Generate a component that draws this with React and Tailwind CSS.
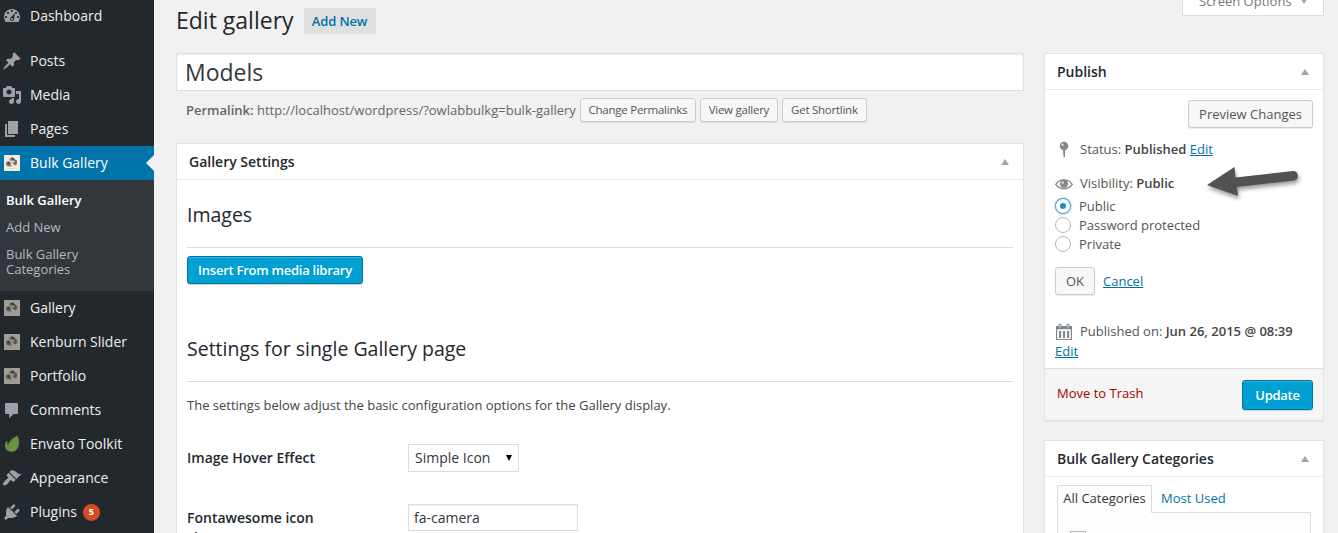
import React from "react";

const PATHS = {
  dashboard:
    "M3.76 16h12.48c1.1-1.37 1.76-3.11 1.76-5 0-4.42-3.58-8-8-8s-8 3.58-8 8c0 1.89.66 3.63 1.76 5zM10 4c.55 0 1 .45 1 1s-.45 1-1 1-1-.45-1-1 .45-1 1-1zM6 6c.55 0 1 .45 1 1s-.45 1-1 1-1-.45-1-1 .45-1 1-1zm8 0c.55 0 1 .45 1 1s-.45 1-1 1-1-.45-1-1 .45-1 1-1zm-5.37 5.55L13 7l-1 6c0 1.1-.9 2-2 2s-2-.9-2-2c0-.57.24-1.08.63-1.45zM4 10c.55 0 1 .45 1 1s-.45 1-1 1-1-.45-1-1 .45-1 1-1zm12 0c.55 0 1 .45 1 1s-.45 1-1 1-1-.45-1-1 .45-1 1-1zm-5 3c0-.55-.45-1-1-1s-1 .45-1 1 .45 1 1 1 1-.45 1-1z",
  post: "M10.44 3.02l1.82-1.82 6.36 6.35-1.83 1.82c-1.05-.68-2.48-.57-3.41.36l-.75.75c-.92.93-1.04 2.35-.35 3.41l-1.83 1.82-2.41-2.41-2.8 2.79c-.42.42-3.38 2.71-3.8 2.29s1.86-3.39 2.28-3.81l2.79-2.79L4.1 9.36l1.83-1.82c1.05.69 2.48.57 3.4-.36l.75-.75c.93-.92 1.05-2.35.36-3.41z",
  media:
    "M13 11V4c0-.55-.45-1-1-1h-1.67L9 1H5L3.67 3H2c-.55 0-1 .45-1 1v7c0 .55.45 1 1 1h10c.55 0 1-.45 1-1zM7 4.5c1.38 0 2.5 1.12 2.5 2.5S8.38 9.5 7 9.5 4.5 8.38 4.5 7 5.62 4.5 7 4.5zM14 6h5v10.5c0 1.38-1.12 2.5-2.5 2.5S14 17.88 14 16.5s1.12-2.5 2.5-2.5c.17 0 .34.02.5.05V9h-3V6zm-4 8.05V13h2v3.5c0 1.38-1.12 2.5-2.5 2.5S7 17.88 7 16.5 8.12 14 9.5 14c.17 0 .34.02.5.05z",
  page: "M6 15V2h10v13H6zm-1 1h8v2H3V5h2v11z",
  comments:
    "M4 3h11c.55 0 1 .45 1 1v9c0 .55-.45 1-1 1h-3.5L7.2 18.2V14H4c-.55 0-1-.45-1-1V4c0-.55.45-1 1-1z",
  appearance:
    "M14.48 11.06L7.41 3.99l1.5-1.5c.5-.56 2.3-.47 3.51.32 1.21.8 1.43 1.28 2.91 2.1 1.18.64 2.45 1.26 4.45.85zm-.71.71L6.7 4.7 4.93 6.47c-.39.39-.39 1.02 0 1.41l1.06 1.06c.39.39.39 1.03 0 1.42-.6.6-1.43 1.11-2.21 1.69-.35.26-.7.53-1.01.84C1.43 14.23.4 16.08 1.4 17.07c.99 1 2.84-.03 4.18-1.36.31-.31.58-.66.85-1.02.57-.78 1.08-1.61 1.69-2.21.39-.39 1.02-.39 1.41 0l1.06 1.06c.39.39 1.02.39 1.41 0z",
  plugins:
    "M13.11 4.36L9.87 7.6 8 5.73l3.24-3.24c.35-.34 1.05-.2 1.56.32.52.51.66 1.21.31 1.55zm-8 1.77l.91-1.12 9.01 9.01-1.19.84c-.71.71-2.63 1.16-3.82 1.16H6.14L4.9 17.26c-.59.59-1.54.59-2.12 0-.59-.58-.59-1.53 0-2.12l1.24-1.24v-3.88c0-1.13.4-3.19 1.09-3.89zm7.26 3.97l3.24-3.24c.34-.35 1.04-.21 1.55.31.52.51.66 1.21.31 1.55l-3.24 3.25z",
};

function Thumb({ active }) {
  return (
    <svg viewBox="0 0 16 16" className={active ? "h-4 w-4" : "h-4 w-4 opacity-60"}>
      <rect width="16" height="16" fill="#f3ecda" />
      <path d="M2 7.500l2.500-1.500 2 1.500.5 2.500-2 1.500-2.500-1z" fill="#77726b" />
      <path d="M5 4l3-2 2 1 3 3-1.500 1-3-1.500-2 .5z" fill="#8d867c" />
      <path d="M9.500 7l3 0 .5 2.500-2 1-2-1.500z" fill="#7b746c" />
      <path d="M7 3.500l2-.5 1.500 1.500-1.500 1zM3.500 8l1.500-.5.5 1.500-1 .5z" fill="#403d3a" />
      <path d="M11 5l2 1-.5 2-1.200-1z" fill="#55504b" />
      <path d="M6.500 6.500l2-.5 1 2-1.500 1.500z" fill="#cfc5b5" />
      <path d="M6.500 10l1.500.5-1 1.500-1.500-.5z" fill="#9a8f83" />
      <path d="M4 13h7l-2 .8H5z" fill="#d8cfba" />
    </svg>
  );
}

function MenuIcon({ name, active }) {
  if (name === "thumb") return <Thumb active={active} />;
  if (name === "envato")
    return (
      <svg viewBox="0 0 16 18" className="h-[18px] w-4">
        <path
          d="M12.300 1.200c.7-.4 1.300-.1 1.600.6 1.200 2.800 1.700 6.900.5 10-1.100 3-3.600 5-6.600 5-4 0-6.800-2.800-6.800-6.300 0-1.900.6-3.300 1.400-4.300.4-.5.9-.3.9.3 0 1.500.2 2.900.8 4.200C4.300 6.200 7.700 3.600 12.300 1.200z"
          fill="#6b9240"
        />
        <path d="M4.200 10.800c.4-3 2.600-5.300 5.500-6.900" stroke="#4c6b33" strokeWidth=".8" fill="none" />
      </svg>
    );
  return (
    <svg viewBox="0 0 20 20" className="h-5 w-5" fill="#9ba1a7">
      <path d={PATHS[name]} />
    </svg>
  );
}

function MenuItem({ icon, label, active, badge }) {
  return (
    <div
      className={
        "relative flex h-[34px] shrink-0 items-center text-sm leading-[18px] " +
        (active ? "bg-[#0073aa] text-white" : "text-[#eee]")
      }
    >
      <span className="flex w-6 shrink-0 justify-center">
        <MenuIcon name={icon} active={active} />
      </span>
      <span className="ml-1.5 whitespace-nowrap">{label}</span>
      {badge && (
        <span className="ml-1.5 flex h-[17px] w-[17px] items-center justify-center rounded-full bg-[#d54e21] text-[9px] font-bold text-white">
          {badge}
        </span>
      )}
      {active && (
        <span className="absolute right-0 top-[9px] border-y-8 border-r-8 border-y-transparent border-r-[#f1f1f1]" />
      )}
    </div>
  );
}

function Sidebar() {
  return (
    <nav className="-mt-px flex w-[154px] shrink-0 flex-col bg-[#23282d]">
      <MenuItem icon="dashboard" label="Dashboard" />
      <div className="h-[11px] shrink-0" />
      <MenuItem icon="post" label="Posts" />
      <MenuItem icon="media" label="Media" />
      <MenuItem icon="page" label="Pages" />
      <MenuItem icon="thumb" label="Bulk Gallery" active />
      <div className="h-[111px] shrink-0 bg-[#32373c] px-1.5 pt-[7px] text-[13px] text-[#b4b9be]">
        <div className="flex h-[27px] items-center font-semibold text-white">Bulk Gallery</div>
        <div className="flex h-[27px] items-center">Add New</div>
        <div className="pt-1.5 leading-[15px]">
          Bulk Gallery
          <br />
          Categories
        </div>
      </div>
      <MenuItem icon="thumb" label="Gallery" />
      <MenuItem icon="thumb" label="Kenburn Slider" />
      <MenuItem icon="thumb" label="Portfolio" />
      <MenuItem icon="comments" label="Comments" />
      <MenuItem icon="envato" label="Envato Toolkit" />
      <MenuItem icon="appearance" label="Appearance" />
      <MenuItem icon="plugins" label="Plugins" badge="5" />
      <div className="h-3 shrink-0" />
    </nav>
  );
}

function Box({ title, children, className }) {
  return (
    <section className={"border border-[#e2e2e2] bg-white shadow-[0_1px_1px_rgba(0,0,0,0.04)] " + className}>
      <div className="flex h-[36px] items-center justify-between border-b border-[#eaeaea] pl-3 pr-[14px]">
        <h3 className="text-sm font-semibold text-[#23282d]">{title}</h3>
        <span className="border-x-4 border-b-[6px] border-x-transparent border-b-[#a0a5aa]" />
      </div>
      {children}
    </section>
  );
}

function Button({ children, className }) {
  return (
    <button
      className={
        "flex shrink-0 items-center justify-center whitespace-nowrap rounded-[3px] border border-[#ccc] bg-[#f7f7f7] text-[#555] shadow-[0_1px_0_rgba(0,0,0,0.08)] " +
        className
      }
    >
      {children}
    </button>
  );
}

function PrimaryButton({ children, className }) {
  return (
    <button
      className={
        "flex items-center justify-center whitespace-nowrap rounded-[3px] border border-[#0073aa] bg-[#00a0d2] pt-0.5 text-[13px] font-semibold tracking-[-0.25px] text-white shadow-[inset_0_1px_0_rgba(120,200,230,0.5),0_1px_0_rgba(0,0,0,0.15)] " +
        className
      }
    >
      {children}
    </button>
  );
}

function Link({ children }) {
  return <a className="text-[#0073aa] underline">{children}</a>;
}

function Radio({ label, checked }) {
  return (
    <label className="flex h-[19px] items-center">
      <span
        className={
          "mb-px flex h-4 w-4 items-center justify-center rounded-full border bg-white " +
          (checked ? "border-[#5b9dd9] shadow-[0_0_2px_rgba(30,140,190,0.8)]" : "border-[#b4b9be]")
        }
      >
        {checked && <span className="h-1.5 w-1.5 rounded-full bg-[#1e8cbe]" />}
      </span>
      <span className="ml-2">{label}</span>
    </label>
  );
}

function GallerySettings() {
  return (
    <Box title="Gallery Settings" className="mt-[21px] h-[420px]">
      <div className="px-2.5 text-[13px] text-[#444]">
        <h2 className="flex h-[68px] items-center border-b border-[#ddd] pt-[3px] text-[19.5px] text-[#23282d]">Images</h2>
        <PrimaryButton className="mt-2 h-7 w-[176px]">Insert From media library</PrimaryButton>
        <h2 className="mt-[38px] flex h-[60px] items-center border-b border-[#ddd] pb-1.5 text-[19.5px] text-[#23282d]">
          Settings for single Gallery page
        </h2>
        <p className="mt-[13px] leading-5">The settings below adjust the basic configuration options for the Gallery display.</p>
        <div className="mt-[29px] flex h-7 items-center">
          <span className="w-[221px] text-sm font-semibold text-[#23282d]">Image Hover Effect</span>
          <div className="flex h-7 w-[111px] items-center justify-between border border-[#ddd] bg-white pl-1.5 pr-1.5 text-sm text-[#32373c]">
            Simple Icon
            <span className="border-x-[3.5px] border-t-[6px] border-x-transparent border-t-black" />
          </div>
        </div>
        <div className="mt-8 flex h-[27px]">
          <span className="w-[221px] pt-[4px] text-sm font-semibold leading-5 text-[#23282d]">
            Fontawesome icon
            <br />
            class
          </span>
          <div className="flex h-[27px] w-[170px] items-center border border-[#ddd] bg-white pl-[5px] text-sm text-[#32373c] shadow-[inset_0_1px_2px_rgba(0,0,0,0.07)]">
            fa-camera
          </div>
        </div>
      </div>
    </Box>
  );
}

function PublishBox() {
  return (
    <Box title="Publish" className="relative mt-[37px] h-[368px]">
      <div className="px-2.5 text-[13px] text-[#555]">
        <div className="flex justify-end pt-2.5">
          <Button className="h-7 w-[125px] pt-0.5 text-[13px]">Preview Changes</Button>
        </div>
        <div className="mt-3 flex h-5 items-center">
          <svg viewBox="0 0 18 18" className="mr-[7px] h-[18px] w-[18px]">
            <circle cx="9" cy="5" r="4.300" fill="#82878c" />
            <path d="M8 9h2.200l-.3 7-1.200.8z" fill="#82878c" />
            <circle cx="7.600" cy="3.700" r="1.200" fill="#d5d7d9" />
          </svg>
          <span>
            Status: <b className="font-semibold text-[#444]">Published</b> <Link>Edit</Link>
          </span>
        </div>
        <div className="mt-[14px] flex h-5 items-center">
          <svg viewBox="0 0 18 14" className="mr-[7px] h-[14px] w-[18px]">
            <path d="M.8 7.400C4.600 1.400 13.400 1.400 17.200 7.400 13.400 13.200 4.600 13.200.8 7.400z" fill="white" stroke="#82878c" strokeWidth="1.300" />
            <circle cx="9" cy="6.800" r="4" fill="#82878c" />
            <circle cx="7.700" cy="5.600" r="1.300" fill="#d5d7d9" />
          </svg>
          <span>
            Visibility: <b className="font-semibold text-[#444]">Public</b>
          </span>
        </div>
        <div className="mt-[3px]">
          <Radio label="Public" checked />
          <Radio label="Password protected" />
          <Radio label="Private" />
        </div>
        <div className="mt-[13px] flex items-center">
          <Button className="h-7 w-10 pt-0.5 text-[13px]">OK</Button>
          <span className="ml-2 pt-0.5">
            <Link>Cancel</Link>
          </span>
        </div>
        <div className="mt-[27px] flex h-5 items-center">
          <svg viewBox="0 0 18 18" className="mr-[7px] h-[18px] w-[18px]">
            <path
              fill="#82878c"
              fillRule="evenodd"
              d="M1 3h2.500V2a1.500 1.500 0 0 1 3 0v1h5V2a1.500 1.500 0 0 1 3 0v1H17v14H1zM2.200 6.300v9.600h13.600V6.300z M4.500 1.800v2.700h1V1.800zM12.500 1.800v2.700h1V1.800z"
            />
            <path d="M4 8h2.200v7H4zM8 8h2.200v7H8zM12 8h2.200v7H12z" fill="#82878c" />
          </svg>
          <span className="whitespace-nowrap">
            Published on: <b className="font-semibold text-[#444]">Jun 26, 2015 @ 08:39</b>
          </span>
        </div>
        <div className="h-[19px] leading-[19px]">
          <Link>Edit</Link>
        </div>
      </div>
      <div className="mt-[7px] flex h-[52px] items-center justify-between border-t border-[#ddd] bg-[#f5f5f5] pl-3 pr-2.5 text-[13px]">
        <span className="pb-0.5 text-[#a00]">Move to Trash</span>
        <PrimaryButton className="h-[30px] w-[71px]">Update</PrimaryButton>
      </div>
      <svg viewBox="0 0 110 50" className="absolute left-[155px] top-[106px] h-[50px] w-[110px]">
        <path
          d="M7 25 L34.500 7 L35.500 17.500 L93 11 A4.800 4.800 0 0 1 94 20.500 L37 27 L38 36 Z"
          fill="#525252"
          style={{ filter: "drop-shadow(1px 3px 2px rgba(0,0,0,.4))" }}
        />
      </svg>
    </Box>
  );
}

function CategoriesBox() {
  return (
    <Box title="Bulk Gallery Categories" className="mt-[19px] h-[150px]">
      <div className="px-3 pt-2 text-[13px]">
        <div className="flex h-[27px]">
          <div className="relative z-10 flex h-7 w-[95px] items-center justify-center border border-b-0 border-[#ddd] bg-[#fdfdfd] pb-px text-[#32373c]">
            All Categories
          </div>
          <div className="flex h-7 items-center pl-[9px] text-[#0073aa]">Most Used</div>
        </div>
        <div className="h-20 w-[254px] border border-[#ddd] bg-[#fdfdfd] pl-3 pt-[18px]">
          <div className="h-4 w-4 border border-[#b4b9be] bg-white" />
        </div>
      </div>
    </Box>
  );
}

export default function App() {
  return (
    <div className="flex h-[533px] w-[1338px] overflow-hidden bg-[#f1f1f1] font-['Open_Sans',sans-serif]">
      <Sidebar />
      <main className="ml-[22px] w-[848px] shrink-0">
        <div className="flex h-[53px] items-start">
          <h1 className="mt-[5px] whitespace-nowrap text-[23px] leading-[30px] text-[#23282d]">Edit gallery</h1>
          <a className="ml-2.5 mt-2 flex h-[26px] w-[72px] items-center justify-center bg-[#e0e0e0] pt-0.5 text-[13px] font-semibold tracking-[-0.15px] text-[#0073aa]">
            Add New
          </a>
        </div>
        <div className="flex h-[38px] items-center border border-[#ddd] bg-white pl-2 text-[23px] text-[#32373c] shadow-[inset_0_1px_2px_rgba(0,0,0,0.07)]">
          Models
        </div>
        <div className="mt-[7px] flex h-6 items-center whitespace-nowrap pl-2.5 text-[13px] text-[#666]">
          <span className="pt-0.5">
            <b className="font-semibold">Permalink:</b> http://localhost/wordpress/?owlabbulkg=bulk-gallery
          </span>
          <div className="ml-1 flex gap-1">
            <Button className="h-6 w-[116px] text-[11.5px] tracking-[-0.25px]">Change Permalinks</Button>
            <Button className="h-6 w-[78px] text-[11.5px] tracking-[-0.25px]">View gallery</Button>
            <Button className="h-6 w-[85px] text-[11.5px] tracking-[-0.25px]">Get Shortlink</Button>
          </div>
        </div>
        <GallerySettings />
      </main>
      <aside className="ml-5 w-[280px] shrink-0">
        <div className="ml-auto flex h-4 w-[142px] items-end border border-t-0 border-[#ddd] bg-white pl-4 text-[13px] text-[#777]">
          <span className="h-6 leading-5">Screen Options</span>
          <span className="mb-[11px] ml-2 border-x-4 border-t-[6px] border-x-transparent border-t-[#a0a5aa]" />
        </div>
        <PublishBox />
        <CategoriesBox />
      </aside>
    </div>
  );
}
